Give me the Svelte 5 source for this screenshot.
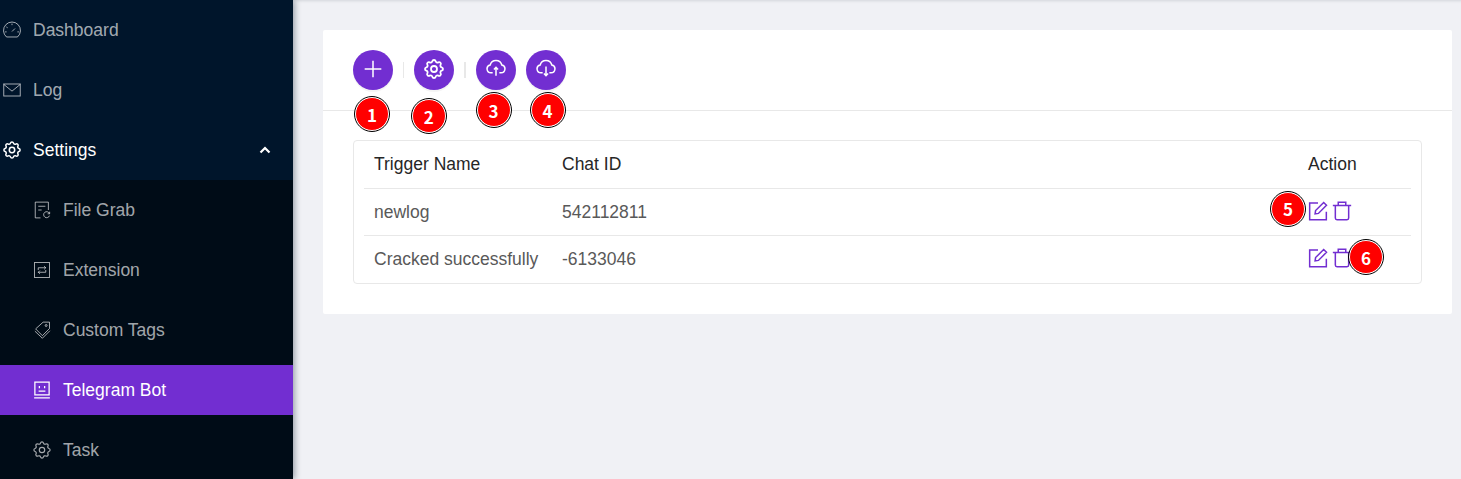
<script>
	const gear =
		'M10.325 4.317c.426-1.756 2.924-1.756 3.35 0a1.724 1.724 0 0 0 2.573 1.066c1.543-.94 3.31 .826 2.37 2.37a1.724 1.724 0 0 0 1.065 2.572c1.756 .426 1.756 2.924 0 3.35a1.724 1.724 0 0 0-1.066 2.573c.94 1.543-.826 3.31-2.37 2.37a1.724 1.724 0 0 0-2.572 1.065c-.426 1.756-2.924 1.756-3.35 0a1.724 1.724 0 0 0-2.573-1.066c-1.543 .94-3.31-.826-2.37-2.37a1.724 1.724 0 0 0-1.065-2.572c-1.756-.426-1.756-2.924 0-3.35a1.724 1.724 0 0 0 1.066-2.573c-.94-1.543 .826-3.31 2.37-2.37 1 .608 2.296 .07 2.572-1.065z';

	const cloud = 'M8 16.500H6a4.700 4.700 0 0 1-1-9.300 7.200 7.200 0 0 1 14 0 4.700 4.700 0 0 1-1 9.300h-2';

	const rows = [
		{ name: 'newlog', chatId: '542112811', badge: 5 },
		{ name: 'Cracked successfully', chatId: '-6133046', badge: 6 }
	];
</script>

<div class="page">
	<aside class="sidebar">
		<ul class="menu">
			<li class="item">
				<svg class="ico" viewBox="0 0 24 24">
					<path d="M4.700 21.300a11.300 11.300 0 1 1 14.600 0z" />
					<path d="M12 14l4-4M12 3.500v2M4.500 8l1.700 1M2.800 14.500h2M19.200 14.500h2" />
				</svg>
				<span>Dashboard</span>
			</li>
			<li class="item">
				<svg class="ico" viewBox="0 0 24 24">
					<rect x="1" y="4" width="22" height="16" />
					<path d="M1 4.500l11 9 11-9" />
				</svg>
				<span>Log</span>
			</li>
			<li class="item open">
				<svg class="ico bold" viewBox="2 2 20 20">
					<path d={gear} />
					<circle cx="12" cy="12" r="3" />
				</svg>
				<span>Settings</span>
				<svg class="chevron" viewBox="0 0 12 8"><path d="M1.500 6.500L6 2l4.500 4.500" /></svg>
			</li>
		</ul>
		<ul class="submenu">
			<li class="sub">
				<svg class="ico" viewBox="0 0 24 24">
					<path d="M10 22.500H3V1.500h17.500V12" />
					<path d="M7 7h9.500M7 12h4.500" />
					<path d="M21.800 16.500a4 4 0 1 0 .2 3M22.200 14.300v2.700h-2.700" />
				</svg>
				<span>File Grab</span>
			</li>
			<li class="sub">
				<svg class="ico" viewBox="0 0 24 24">
					<rect x="2" y="2" width="20" height="20" />
					<path d="M7 12v-3h10M14.800 6.800l2.200 2.200-2.200 2.200M17 12v3H7M9.200 17.200L7 15l2.200-2.200" />
				</svg>
				<span>Extension</span>
			</li>
			<li class="sub">
				<svg class="ico" viewBox="0 0 24 24">
					<path d="M13.500 1.500h8.500v8.500l-9.500 9.500-9-9z" />
					<circle cx="17.500" cy="6" r="1.300" />
					<path d="M2.500 13.500l10 9.500 10-10" />
				</svg>
				<span>Custom Tags</span>
			</li>
			<li class="sub active">
				<svg class="ico bold" viewBox="0 0 24 24">
					<rect x="2.500" y="1.500" width="19" height="17" />
					<path d="M8.500 6.500v3M15.500 6.500v3M7.500 13.500h9M1.500 22.500h21" />
				</svg>
				<span>Telegram Bot</span>
			</li>
			<li class="sub">
				<svg class="ico" viewBox="2 2 20 20">
					<path d={gear} />
					<circle cx="12" cy="12" r="3" />
				</svg>
				<span>Task</span>
			</li>
		</ul>
	</aside>

	<main class="content">
		<section class="card">
			<div class="toolbar">
				<div class="tool">
					<button class="round" aria-label="Add">
						<svg viewBox="0 0 24 24"><path d="M12 2v20M2 12h20" /></svg>
					</button>
					<span class="badge b1">1</span>
				</div>
				<i class="sep"></i>
				<div class="tool">
					<button class="round" aria-label="Settings">
						<svg viewBox="2 2 20 20">
							<path d={gear} />
							<circle cx="12" cy="12" r="3" />
						</svg>
					</button>
					<span class="badge b2">2</span>
				</div>
				<i class="sep"></i>
				<div class="tool">
					<button class="round" aria-label="Upload">
						<svg viewBox="0 0 24 24">
							<path d={cloud} />
							<path d="M12 20v-10M9.500 12.500L12 10l2.500 2.500" />
						</svg>
					</button>
					<span class="badge b3">3</span>
				</div>
				<div class="tool">
					<button class="round" aria-label="Download">
						<svg viewBox="0 0 24 24">
							<path d={cloud} />
							<path d="M12 9v11M9.500 17.500L12 20l2.500-2.500" />
						</svg>
					</button>
					<span class="badge b4">4</span>
				</div>
			</div>

			<div class="body">
				<div class="table-wrap">
					<table>
						<colgroup>
							<col class="col-name" />
							<col />
							<col class="col-action" />
						</colgroup>
						<thead>
							<tr>
								<th>Trigger Name</th>
								<th>Chat ID</th>
								<th>Action</th>
							</tr>
						</thead>
						<tbody>
							{#each rows as row}
								<tr>
									<td>{row.name}</td>
									<td>{row.chatId}</td>
									<td>
										<div class="actions">
											<svg viewBox="0 0 24 24">
												<path d="M22 13v9.500H2V2.500h10" />
												<path d="M8.500 15.500l.6-4L18.800 1.800l3.400 3.400-9.700 9.700z" />
											</svg>
											<svg viewBox="0 0 24 24">
												<path d="M4 6v14.500a2 2 0 0 0 2 2h12a2 2 0 0 0 2-2V6" />
												<path d="M1 5.500h22M7.500 5V1.500h9V5" />
											</svg>
											<span class="badge {row.badge === 5 ? 'b5' : 'b6'}">{row.badge}</span>
										</div>
									</td>
								</tr>
							{/each}
						</tbody>
					</table>
				</div>
			</div>
		</section>
	</main>
</div>

<style>
	:global(body) {
		margin: 0;
		overflow: hidden;
		font-family: 'Liberation Sans', Arial, sans-serif;
	}

	.page {
		display: flex;
		height: 479px;
		background: #f0f1f5;
		overflow: hidden;
	}

	.sidebar {
		flex: 0 0 293px;
		background: #00152b;
		box-shadow: 2px 0 6px rgba(0, 21, 41, 0.35);
		position: relative;
		z-index: 2;
	}

	ul {
		list-style: none;
		margin: 0;
		padding: 0;
	}

	.item,
	.sub {
		display: flex;
		align-items: center;
		font-size: 17.500px;
		color: rgba(255, 255, 255, 0.65);
	}

	.item {
		height: 60px;
		padding-left: 3px;
		gap: 12px;
	}

	.item.open {
		color: #fff;
	}

	.ico {
		width: 18px;
		height: 18px;
		fill: none;
		stroke: currentColor;
		stroke-width: 1.300;
		flex: none;
	}

	.ico.bold {
		stroke-width: 1.700;
	}

	.chevron {
		width: 12px;
		height: 8px;
		fill: none;
		stroke: #fff;
		stroke-width: 2.200;
		margin-left: auto;
		margin-right: 22px;
	}

	.submenu {
		background: #000c17;
		height: 299px;
		padding-top: 5px;
	}

	.sub {
		height: 50px;
		margin-bottom: 10px;
		padding-left: 33px;
		gap: 12px;
	}

	.sub.active {
		background: #722ed1;
		color: #fff;
	}

	.content {
		flex: 1;
		padding: 30px 9px 0 30px;
		box-shadow: inset 0 3px 3px -2px rgba(0, 21, 41, 0.12);
	}

	.card {
		background: #fff;
		border-radius: 2px;
	}

	.toolbar {
		display: flex;
		align-items: center;
		padding: 20px 30px;
		border-bottom: 1px solid #e8e8e8;
	}

	.tool {
		position: relative;
		width: 40px;
		height: 40px;
	}

	.tool + .tool {
		margin-left: 10px;
	}

	.sep {
		width: 1.250px;
		height: 16px;
		margin: 0 10px;
		background: #e8e8e8;
	}

	.round {
		display: flex;
		align-items: center;
		justify-content: center;
		width: 40px;
		height: 40px;
		padding: 0;
		border: none;
		border-radius: 50%;
		background: #722ed1;
		box-shadow: 0 2px 0 rgba(0, 0, 0, 0.045);
	}

	.round svg {
		width: 20px;
		height: 20px;
		margin-bottom: 3px;
		fill: none;
		stroke: #fff;
		stroke-width: 1.800;
	}

	.badge {
		position: absolute;
		z-index: 3;
		display: flex;
		align-items: center;
		justify-content: center;
		box-sizing: border-box;
		width: 34px;
		height: 34px;
		border-radius: 50%;
		background: #f00;
		border: 1px solid #fff;
		outline: 1px solid #000;
		color: #fff;
		font-family: 'Noto Sans CJK SC', 'Noto Sans', sans-serif;
		font-weight: 700;
		font-size: 17px;
	}

	.b1 { left: 2px; top: 47px; }
	.b2 { left: -2.500px; top: 49px; }
	.b3 { left: 1px; top: 43px; }
	.b4 { left: 5px; top: 43px; }
	.b5 { left: -37px; top: -9px; }
	.b6 { left: 41px; top: -8px; }

	.body {
		padding: 29px 30px 30px;
	}

	.table-wrap {
		border: 1px solid #e8e8e8;
		border-radius: 4px;
		padding: 0 10px;
	}

	table {
		width: 100%;
		table-layout: fixed;
		border-collapse: collapse;
		font-size: 17.500px;
	}

	.col-name {
		width: 188px;
	}

	.col-action {
		width: 113px;
	}

	th,
	td {
		padding: 0 10px;
		text-align: left;
		color: #595959;
		font-weight: 400;
	}

	th {
		height: 47px;
		color: #262626;
		border-bottom: 1px solid #e8e8e8;
	}

	td {
		height: 46px;
	}

	tbody tr:last-child td {
		height: 47px;
	}

	tbody tr:first-child td {
		border-bottom: 1px solid #e8e8e8;
	}

	.actions {
		position: relative;
		display: flex;
		align-items: center;
		gap: 4px;
		height: 20px;
		margin-bottom: 3px;
	}

	.actions svg {
		width: 20px;
		height: 20px;
		fill: none;
		stroke: #722ed1;
		stroke-width: 1.800;
	}
</style>
